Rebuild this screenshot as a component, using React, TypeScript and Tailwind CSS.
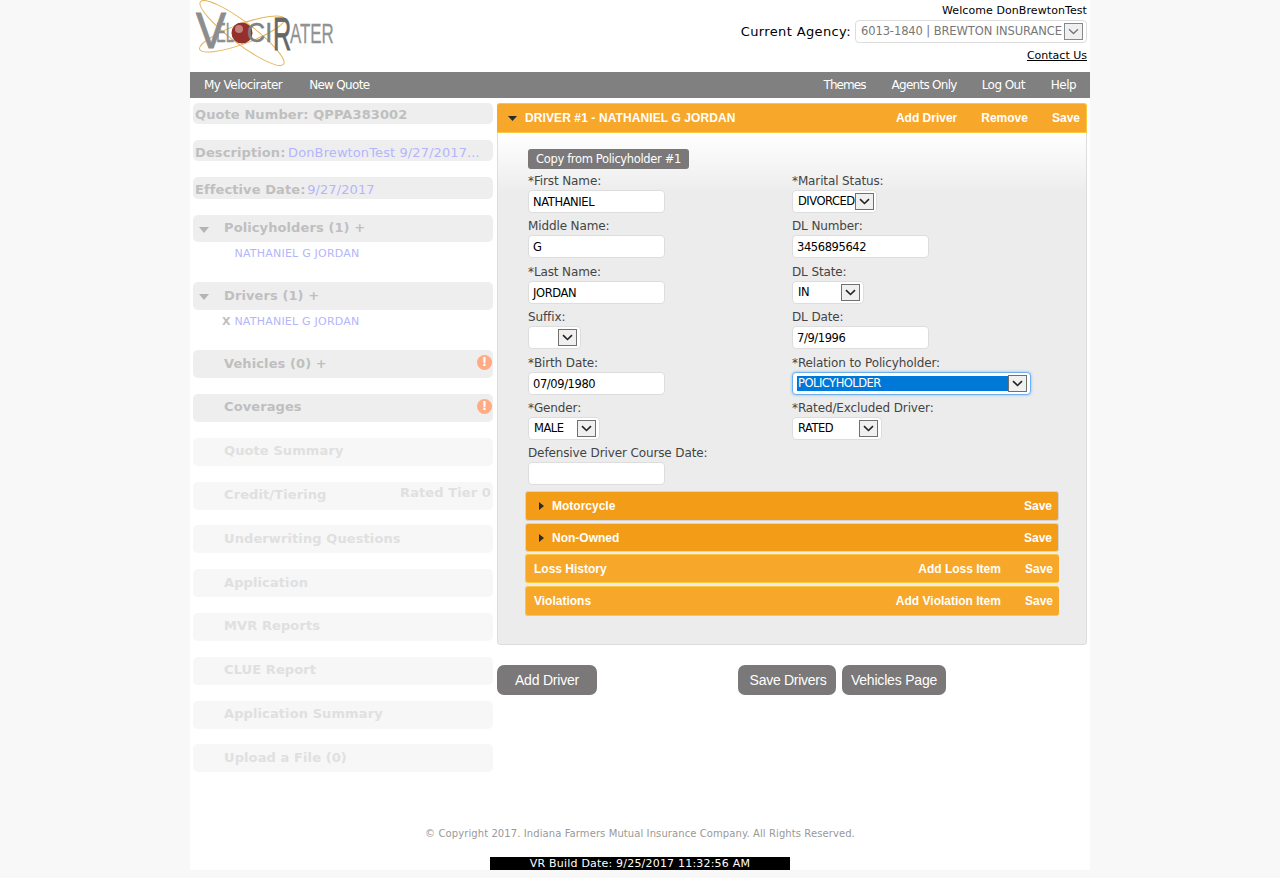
import React from "react";

const tahoma = "[font-family:'DejaVu_Sans',sans-serif]";
const arial = "[font-family:'Liberation_Sans',sans-serif]";

function Logo() {
  const f = "'Liberation Sans',sans-serif";
  return (
    <svg width="150" height="72" viewBox="0 0 150 72" className="block">
      <ellipse cx="50" cy="33" rx="52" ry="11" fill="none" stroke="#e3b558" strokeWidth="1" transform="rotate(37 50 33)" />
      <ellipse cx="50" cy="34" rx="45" ry="10" fill="none" stroke="#e3b558" strokeWidth="1" transform="rotate(-20 50 34)" />
      <text transform="translate(4 48) scale(0.9 1)" fontFamily={f} fontSize="50" fill="#8d8d8d" stroke="#8d8d8d" strokeWidth="1">V</text>
      <text transform="translate(24 42) scale(0.545 1)" fontFamily={f} fontSize="27" fill="#8f8f8f" stroke="#8f8f8f" strokeWidth="0.4">EL</text>
      <text transform="translate(40 42) scale(0.76 1)" fontFamily={f} fontSize="27" fill="#9a9a9a">O</text>
      <circle cx="50" cy="33" r="10.5" fill="#93302c" />
      <circle cx="47" cy="29" r="4" fill="#c4807a" />
      <text transform="translate(55 42) scale(0.93 1)" fontFamily={f} fontSize="27" fill="#808080" stroke="#808080" strokeWidth="0.4">CI</text>
      <text transform="translate(81 50) scale(0.55 1)" fontFamily={f} fontSize="46" fill="#666666" stroke="#666666" strokeWidth="0.8">R</text>
      <text transform="translate(98 43) scale(0.625 1)" fontFamily={f} fontSize="27" fill="#929292" stroke="#929292" strokeWidth="0.3">ATER</text>
    </svg>
  );
}

function Arrow() {
  return (
    <span className="w-[19px] h-[17px] border border-[#707070] bg-[#f0f0f0] flex items-center justify-center shrink-0">
      <svg width="11" height="7" viewBox="0 0 11 7">
        <path d="M1 1.2 L5.5 5.5 L10 1.2" fill="none" stroke="#222" strokeWidth="1.6" />
      </svg>
    </span>
  );
}

const labelCls = `h-[17px] text-[12px] leading-[17px] text-[#444] ${tahoma} tracking-[-0.12px] whitespace-nowrap`;

function Field({ label, value }: { label: string; value?: string }) {
  return (
    <div className="h-[45.4px]">
      <div className={labelCls}>{label}</div>
      <div className={`h-[23px] w-[137px] bg-white border border-[#ddd] rounded-[4px] pl-1 text-[11.5px] leading-[22px] text-black ${tahoma} tracking-[-0.4px]`}>{value}</div>
    </div>
  );
}

function Select({ label, value, width, focus = false, pr = "pr-[3px]" }: { label: string; value: string; width: string; focus?: boolean; pr?: string }) {
  return (
    <div className="h-[45.4px]">
      <div className={labelCls}>{label}</div>
      <div className={`h-[23px] ${width} bg-white border rounded-[4px] pl-1 ${pr} flex items-center justify-between text-[11.5px] text-black ${tahoma} tracking-[-0.5px] ${focus ? "border-[#6cb0f0] shadow-[0_0_3px_#7db9f0]" : "border-[#ddd]"}`}>
        <span className={focus ? "flex-1 bg-[#0078d7] text-white h-[15px] leading-[15px] pl-px" : "leading-[21px] pl-px"}>{value}</span>
        <Arrow />
      </div>
    </div>
  );
}

function SubBar({ title, right, dark = false, cls }: { title: string; right?: string; dark?: boolean; cls: string }) {
  return (
    <div className={`${cls} flex items-center ${arial} text-[12px] font-bold text-white ${dark ? "bg-[#f39c17] border border-[#d5d5d5] rounded-[3px]" : "bg-[#f7a729] border-l border-b border-t border-[#fbc83c] rounded-[3px]"}`}>
      {dark ? (
        <svg width="5" height="8" viewBox="0 0 5 8" className="ml-[13px] mr-[8px]"><path d="M0 0 L5 4 L0 8 Z" fill="#2a2a2a" /></svg>
      ) : (
        <span className="ml-2" />
      )}
      <span>{title}</span>
      <span className="ml-auto mr-[24px]">{right}</span>
      <span className="mr-[6px]">Save</span>
    </div>
  );
}

function Pill({ children, top, dim = false, h = "h-[28px]" }: { children: React.ReactNode; top: string; dim?: boolean; h?: string }) {
  return (
    <div className={`${top} ${h} relative rounded-[5px] flex items-center font-bold text-[13px] tracking-[0.1px] ${tahoma} ${dim ? "bg-[#f7f7f7] text-[#e0e0e0]" : "bg-[#eeeeee] text-[#bfbfbf]"}`}>
      {children}
    </div>
  );
}

function Warn() {
  return (
    <span className="absolute right-[1px] top-[5px] w-[15px] h-[15px] rounded-full bg-[#ffab84] text-white text-[12px] font-bold leading-[15px] text-center">!</span>
  );
}

function Caret() {
  return (
    <svg width="12" height="6" viewBox="0 0 12 6" className="absolute left-[5px] top-[12px]"><path d="M1 0 L11 0 L6 6 Z" fill="#b4b4b4" /></svg>
  );
}

const Label = ({ children, pb = "pb-[1px]" }: { children: React.ReactNode; pb?: string }) => <span className={`pl-[31px] ${pb}`}>{children}</span>;

export default function App() {
  return (
    <div className="min-h-[878px] bg-[#f8f8f8]">
      <div className="w-[900px] h-[870px] ml-[190px] bg-white relative">
        <header className="h-[72px] flex justify-between">
          <div className="pl-[2px]"><Logo /></div>
          <div className={`pr-[3px] flex flex-col items-end ${tahoma}`}>
            <div className="text-[11px] leading-[13px] mt-[4px] text-black tracking-[0.08px]">Welcome DonBrewtonTest</div>
            <div className="flex items-center mt-[3px]">
              <span className="text-[13px] tracking-[0.38px] mr-[4px] text-black">Current Agency:</span>
              <div className="h-[23px] w-[232px] border border-[#ddd] rounded-[4px] pl-[5px] pr-[3px] flex items-center justify-between text-[11.5px] text-[#777] whitespace-nowrap overflow-hidden tracking-[-0.1px]">
                <span>6013-1840 | BREWTON INSURANCE</span>
                <span className="w-[19px] h-[17px] border border-[#888] bg-[#f0f0f0] flex items-center justify-center shrink-0 ml-[1px]">
                  <svg width="11" height="7" viewBox="0 0 11 7"><path d="M1 1.2 L5.5 5.5 L10 1.2" fill="none" stroke="#777" strokeWidth="1.4" /></svg>
                </span>
              </div>
            </div>
            <div className="text-[11px] leading-[13px] mt-[6px] underline text-black">Contact Us</div>
          </div>
        </header>

        <nav className={`h-[26px] bg-[#808080] text-white text-[12px] flex items-center pl-[14px] pr-[14px] ${tahoma} tracking-[-0.55px]`}>
          <span>My Velocirater</span>
          <span className="ml-[27px] tracking-[-0.7px]">New Quote</span>
          <span className="ml-auto tracking-[-0.95px]">Themes</span>
          <span className="ml-[26px] tracking-[-0.72px]">Agents Only</span>
          <span className="ml-[25px]">Log Out</span>
          <span className="ml-[26px]">Help</span>
        </nav>

        <div className="flex pl-[3px] pt-[5px]">
          <aside className="w-[300px] shrink-0">
            <Pill top="" h="h-[21px]"><span className="pl-[2px] pt-[2px]">Quote Number: QPPA383002</span></Pill>
            <Pill top="mt-[16px]" h="h-[21px]"><span className="pl-[2px] pt-[4px] whitespace-nowrap">Description: <span className="font-normal text-[#b5b5fb] tracking-[0.1px] ml-[-2px]">DonBrewtonTest 9/27/2017...</span></span></Pill>
            <Pill top="mt-[16px]" h="h-[22px]"><span className="pl-[2px] pt-[3px]">Effective Date: <span className="font-normal text-[#b5b5fb] ml-[-3px]">9/27/2017</span></span></Pill>
            <Pill top="mt-[16px]" h="h-[27px]"><Caret /><Label>Policyholders (1) +</Label></Pill>
            <div className={`h-[40px] pl-[41.5px] pt-[4px] text-[11px] leading-[16px] text-[#b5b5fb] ${tahoma} tracking-[0.22px]`}>NATHANIEL G JORDAN</div>
            <Pill top=""><Caret /><Label>Drivers (1) +</Label></Pill>
            <div className={`h-[40px] pl-[29px] pt-[4px] text-[11px] leading-[16px] text-[#b5b5fb] ${tahoma} tracking-[0.22px]`}><span className="font-bold text-[#bfbfbf]">X</span> NATHANIEL G JORDAN</div>
            <Pill top=""><Label>Vehicles (0) +</Label><Warn /></Pill>
            <Pill top="mt-[16px]"><Label pb="pb-[3px]">Coverages</Label><Warn /></Pill>
            <Pill top="mt-[16px]" dim><Label pb="pb-[3px]">Quote Summary</Label></Pill>
            <Pill top="mt-[16px]" dim><Label pb="pb-[3px]">Credit/Tiering</Label><span className="absolute right-[2px] top-[1px]">Rated Tier 0</span></Pill>
            <Pill top="mt-[15px]" dim><Label>Underwriting Questions</Label></Pill>
            <Pill top="mt-[16px]" dim><Label>Application</Label></Pill>
            <Pill top="mt-[16px]" dim><Label pb="pb-[3px]">MVR Reports</Label></Pill>
            <Pill top="mt-[16px]" dim><Label pb="pb-[3px]">CLUE Report</Label></Pill>
            <Pill top="mt-[16px]" dim><Label pb="pb-[3px]">Application Summary</Label></Pill>
            <Pill top="mt-[15px]" dim><Label>Upload a File (0)</Label></Pill>
          </aside>

          <main className="ml-[4px] w-[590px]">
            <div className={`h-[30px] bg-[#f7a729] border-t border-b border-r border-[#fbc83c] rounded-t-[3px] flex items-center text-white text-[12px] font-bold ${arial}`}>
              <svg width="9" height="5" viewBox="0 0 9 5" className="ml-[11px] mr-[8px]"><path d="M0 0 L9 0 L4.5 5 Z" fill="#2a2a2a" /></svg>
              <span className="tracking-[0.1px]">DRIVER #1 - NATHANIEL G JORDAN</span>
              <span className="ml-auto">Add Driver</span>
              <span className="ml-[24px]">Remove</span>
              <span className="ml-[24px] mr-[6px]">Save</span>
            </div>
            <section className="h-[512px] border-x border-b border-[#ddd] rounded-b-[4px] bg-[linear-gradient(#ffffff_0px,#f6f6f6_30px,#ececec_60px,#ececec_100%)] pl-[30px] pt-[16px]">
              <div className={`w-[161px] h-[20px] rounded-[3px] bg-[#7a7878] text-white text-[11.5px] leading-[20px] text-center ${tahoma} tracking-[-0.35px]`}>Copy from Policyholder #1</div>
              <div className="flex mt-[4px]">
                <div className="w-[264px]">
                  <Field label="*First Name:" value="NATHANIEL" />
                  <Field label="Middle Name:" value="G" />
                  <Field label="*Last Name:" value="JORDAN" />
                  <Select label="Suffix:" value="" width="w-[53px]" />
                  <Field label="*Birth Date:" value="07/09/1980" />
                  <Select label="*Gender:" value="MALE" width="w-[72px]" />
                  <Field label="Defensive Driver Course Date:" />
                </div>
                <div>
                  <Select label="*Marital Status:" value="DIVORCED" width="w-[85px]" pr="pr-[4px]" />
                  <Field label="DL Number:" value="3456895642" />
                  <Select label="DL State:" value="IN" width="w-[72px]" />
                  <Field label="DL Date:" value="7/9/1996" />
                  <Select label="*Relation to Policyholder:" value="POLICYHOLDER" width="w-[239px]" focus />
                  <Select label="*Rated/Excluded Driver:" value="RATED" width="w-[90px]" />
                </div>
              </div>
              <div className="w-[534px] ml-[-3px] mt-[0.3px]">
                <SubBar title="Motorcycle" dark cls="mb-[2px] h-[30px]" />
                <SubBar title="Non-Owned" dark cls="mb-[2px] h-[29px]" />
                <SubBar title="Loss History" right="Add Loss Item" cls="mb-[3px] h-[29px]" />
                <SubBar title="Violations" right="Add Violation Item" cls="h-[30px]" />
              </div>
            </section>
            <div className={`flex mt-[20px] text-white text-[14px] ${arial} tracking-[-0.2px]`}>
              <div className="w-[100px] h-[30px] rounded-[7px] bg-[#7a7878] leading-[30px] text-center">Add Driver</div>
              <div className="ml-[141px] w-[98px] h-[30px] rounded-[7px] bg-[#7a7878] leading-[30px] text-center pl-[2px] tracking-[-0.28px]">Save Drivers</div>
              <div className="ml-[6px] w-[104px] h-[30px] rounded-[7px] bg-[#7a7878] leading-[30px] text-center">Vehicles Page</div>
            </div>
          </main>
        </div>

        <footer className={`absolute left-0 right-0 top-[826px] text-center ${tahoma}`}>
          <div className="text-[10px] leading-[14px] text-[#999] tracking-[0.09px] pt-px">© Copyright 2017. Indiana Farmers Mutual Insurance Company. All Rights Reserved.</div>
          <div className="mt-[16px] mx-auto w-[300px] h-[13px] bg-black text-white text-[11px] leading-[14px] tracking-[0.2px]">VR Build Date: 9/25/2017 11:32:56 AM</div>
        </footer>
      </div>
    </div>
  );
}
